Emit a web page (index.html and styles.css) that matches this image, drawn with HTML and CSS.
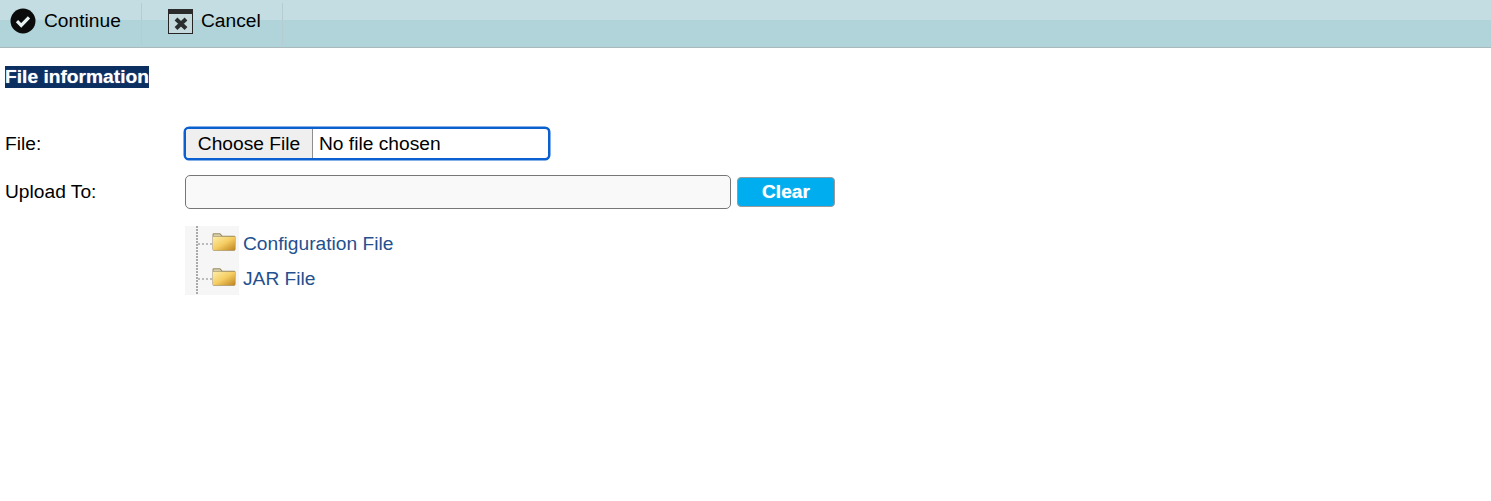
FILE: index.html
```html
<!DOCTYPE html>
<html lang="en">
<head>
    <meta charset="UTF-8">
    <title>File information</title>
    <link rel="stylesheet" href="styles.css">
</head>
<body>
    <!-- Toolbar -->
    <div class="toolbar">
        <a class="tool tool-continue" href="#">
            <svg class="tool-icon" width="26" height="26" viewBox="0 0 26 26">
                <circle cx="13" cy="13" r="12.5" fill="#0b0b0b"/>
                <path d="M7 13.200l4.200 4.200 7.800-8" fill="none" stroke="#e8f2f3" stroke-width="3.200"/>
            </svg>
            Continue
        </a>
        <a class="tool tool-cancel" href="#">
            <svg class="tool-icon" width="25" height="25" viewBox="0 0 25 25">
                <rect x="0.500" y="0.500" width="24" height="24" fill="#c6dade" stroke="#252525"/>
                <rect x="0" y="0" width="25" height="5" fill="#2b2b2b"/>
                <path d="M8 10l10 9.500M18 10l-10 9.500" fill="none" stroke="#2b2e2f" stroke-width="4"/>
            </svg>
            Cancel
        </a>
    </div>

    <div class="content">
        <h2 class="section-title"><span>File information</span></h2>

        <div class="form-row row-file">
            <label class="form-label">File:</label>
            <input class="file-input" type="file">
        </div>

        <div class="form-row row-upload">
            <label class="form-label">Upload To:</label>
            <input class="text-input" type="text">
            <button class="btn-clear" type="button">Clear</button>
        </div>

        <!-- Folder tree -->
        <div class="tree">
            <div class="tree-node">
                <span class="tree-branch"></span>
                <svg class="folder" width="24" height="20" viewBox="0 0 25 20">
                    <use href="#folder-shape"/>
                </svg>
                <a href="#">Configuration File</a>
            </div>
            <div class="tree-node">
                <span class="tree-branch"></span>
                <svg class="folder" width="24" height="20" viewBox="0 0 25 20">
                    <use href="#folder-shape"/>
                </svg>
                <a href="#">JAR File</a>
            </div>
        </div>
    </div>

    <svg class="svg-defs" width="0" height="0">
        <defs>
            <linearGradient id="folder-fill" x1="0" y1="0" x2="1" y2="1">
                <stop offset="0" stop-color="#fdeeaa"/>
                <stop offset="0.500" stop-color="#f5cd62"/>
                <stop offset="1" stop-color="#bf8420"/>
            </linearGradient>
            <g id="folder-shape">
                <path d="M0.500 2.500Q0.500 1 2 1H8.500L11 3.500H23Q24.500 3.500 24.500 5V17.500Q24.500 19 23 19H2Q0.500 19 0.500 17.500Z" fill="#9a8a62"/>
                <path d="M1.500 3Q1.500 2 2.500 2H8L10 4H1.500Z" fill="#d8cfae"/>
                <path d="M1 4.500H24V17.500Q24 18.500 23 18.500H2Q1 18.500 1 17.500Z" fill="url(#folder-fill)"/>
            </g>
        </defs>
    </svg>
</body>
</html>
```

FILE: styles.css
```css
body {
    font-family: "Liberation Sans", Arial, sans-serif;
    font-size: 19.2px;
    margin: 0;
    padding: 0;
    color: #000;
    background-color: #fff;
}

.toolbar {
    display: flex;
    height: 44px;
    padding-top: 3px;
    background: linear-gradient(#c3dde2 0, #c3dde2 20px, #b1d4db 20px);
    border-bottom: 1px solid #a9b9bc;
}

.tool {
    display: flex;
    align-items: center;
    height: 42px;
    color: #000;
    text-decoration: none;
    border-right: 1px solid #b5cdd1;
    box-sizing: border-box;
    padding-bottom: 7px;
}

.tool-continue {
    width: 142px;
    padding-left: 10px;
}

.tool-cancel {
    width: 141px;
    padding-left: 26px;
}

.tool-cancel .tool-icon {
    margin-top: 2px;
}

.tool-icon {
    margin-right: 8px;
    flex: none;
}

.content {
    padding-left: 5px;
}

.section-title {
    margin: 18px 0 0;
    font-size: 19.2px;
    font-weight: bold;
    line-height: 22px;
}

.section-title span {
    background-color: #0c2f62;
    color: #fff;
    display: inline-block;
    text-shadow: 0 0 1px rgba(255, 255, 255, 0.6);
}

.form-row {
    display: flex;
    align-items: center;
}

.form-label {
    width: 179px;
    flex: none;
}

.row-file {
    margin-top: 39px;
    height: 33px;
}

.file-input {
    width: 366px;
    height: 33px;
    box-sizing: border-box;
    margin: 0;
    padding: 0;
    border: 2px solid #0a60d0;
    border-radius: 5px;
    box-shadow: 0 0 0 0.5px #0a60d0;
    font-family: inherit;
    font-size: 19.2px;
    background-color: #fff;
    outline: none;
}

.file-input::file-selector-button {
    width: 127px;
    height: 29px;
    margin: 0 6px 0 0;
    padding: 0;
    border: none;
    border-right: 1px solid #8f8f8f;
    background-color: #efefef;
    font-family: inherit;
    font-size: 19.2px;
    color: #000;
}

.row-upload {
    margin-top: 15px;
    height: 34px;
}

.text-input {
    width: 546px;
    height: 34px;
    box-sizing: border-box;
    margin: 0 6px 0 1px;
    border: 1px solid #777;
    border-radius: 5px;
    background-color: #f9f9f9;
}

.btn-clear {
    width: 98px;
    height: 30px;
    padding: 0;
    border: 1px solid #9a9a9a;
    border-radius: 4px;
    background-color: #00aeef;
    color: #fff;
    font-family: inherit;
    font-size: 19.2px;
    font-weight: bold;
    text-shadow: 0 0 1px rgba(255, 255, 255, 0.6);
}

.tree {
    width: 54px;
    height: 69px;
    margin: 17px 0 0 180px;
    background-color: #f6f6f6;
    background-image: repeating-linear-gradient(#aaa 0, #aaa 2px, transparent 2px, transparent 3px);
    background-size: 2px 100%;
    background-position: 11px 0;
    background-repeat: no-repeat;
}

.tree-node {
    display: flex;
    align-items: center;
    height: 35px;
    white-space: nowrap;
}

.tree-branch {
    width: 14px;
    height: 0;
    margin-left: 13px;
    flex: none;
    border-top: 2px dotted #bbb;
}

.folder {
    flex: none;
    margin-bottom: 3px;
    margin-right: 7px;
}

.tree-node a {
    color: #23508f;
    text-decoration: none;
}

.svg-defs {
    position: absolute;
}
```
